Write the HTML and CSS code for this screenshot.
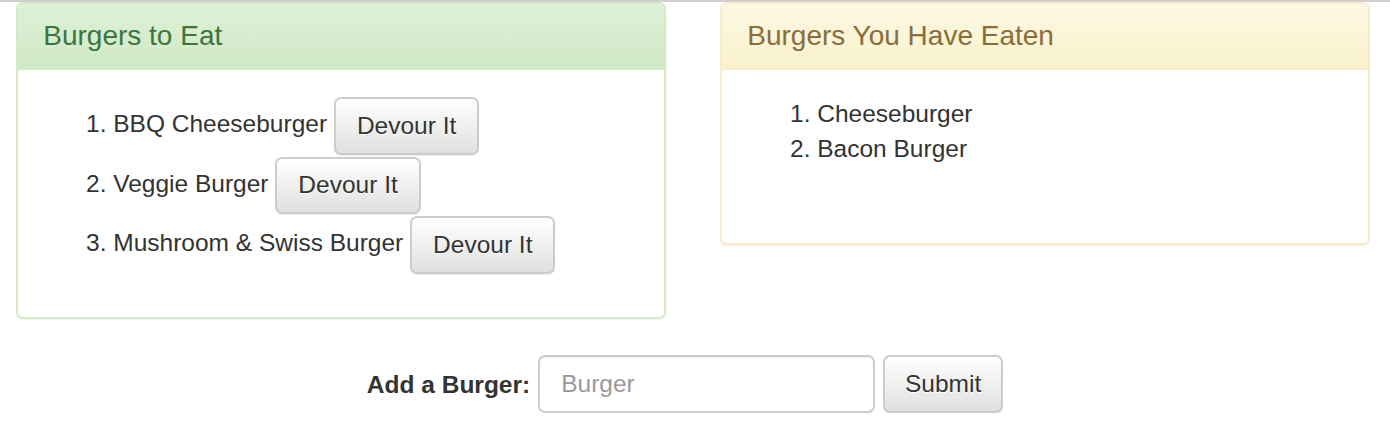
FILE: index.html
```html
<!DOCTYPE html>
<html>
<head>
<meta charset="utf-8">
<title>Burgers</title>
<link rel="stylesheet" href="styles.css">
</head>
<body>
<div class="topline"></div>
<div class="row">
  <div class="panel panel-success">
    <div class="panel-heading"><h3 class="panel-title">Burgers to Eat</h3></div>
    <div class="panel-body">
      <ol class="list list-eat">
        <li>BBQ Cheeseburger <button class="btn">Devour It</button></li>
        <li>Veggie Burger <button class="btn">Devour It</button></li>
        <li>Mushroom &amp; Swiss Burger <button class="btn">Devour It</button></li>
      </ol>
    </div>
  </div>
  <div class="panel panel-warning">
    <div class="panel-heading"><h3 class="panel-title">Burgers You Have Eaten</h3></div>
    <div class="panel-body">
      <ol class="list list-eaten">
        <li>Cheeseburger</li>
        <li>Bacon Burger</li>
      </ol>
    </div>
  </div>
</div>
<form class="add-form">
  <label class="add-label" for="burger">Add a Burger:</label>
  <input class="form-control" id="burger" type="text" placeholder="Burger">
  <button class="btn" type="button">Submit</button>
</form>
</body>
</html>
```

FILE: styles.css
```css
html, body {
  margin: 0;
  padding: 0;
  background: #fff;
}
body {
  font-family: "Liberation Sans", Arial, Helvetica, sans-serif;
  font-size: 24.5px;
  line-height: 35px;
  color: #333;
}
.topline {
  height: 2px;
  background: #cfcfcf;
}
.row {
  display: flex;
  gap: 54px;
  padding-left: 16px;
}
.panel {
  width: 650px;
  box-sizing: border-box;
  border: 2px solid transparent;
  border-radius: 7px;
  background: #fff;
  box-shadow: 0 1px 2px rgba(0, 0, 0, 0.05);
  align-self: flex-start;
}
.panel-heading {
  padding: 16.5px 25.25px;
  border-bottom: 2px solid transparent;
  border-radius: 5px 5px 0 0;
}
.panel-title {
  margin: 0;
  font-size: 28px;
  line-height: 30.8px;
  font-weight: 400;
}
.panel-success { border-color: #d6e9c6; }
.panel-success .panel-heading {
  color: #3c763d;
  background: linear-gradient(to bottom, #dff0d8 0%, #d0e9c6 100%);
  border-color: #d6e9c6;
}
.panel-warning { border-color: #faebcc; }
.panel-warning .panel-heading {
  color: #8a6d3b;
  background: linear-gradient(to bottom, #fcf8e3 0%, #faf2cc 100%);
  border-color: #faebcc;
}
.panel-body {
  padding: 26.25px 26.25px 25.25px;
}
.list {
  margin: 0 0 17.5px;
  padding-left: 69px;
}
.list-eaten {
  margin-bottom: 52px;
}
.btn {
  display: inline-block;
  vertical-align: middle;
  box-sizing: border-box;
  margin: 1px 0;
  padding: 10.5px 21px;
  font-family: inherit;
  font-size: 24.5px;
  line-height: 32.5px;
  color: #333;
  text-shadow: 0 1px 0 #fff;
  background: linear-gradient(to bottom, #fff 0%, #e0e0e0 100%);
  border: 2px solid #ccc;
  border-radius: 7px;
  box-shadow: inset 0 1px 0 rgba(255, 255, 255, 0.15), 0 1px 1px rgba(0, 0, 0, 0.075);
  cursor: pointer;
}
.add-form {
  display: flex;
  align-items: center;
  justify-content: center;
  gap: 8px;
  margin-top: 36px;
  padding-right: 20px;
}
.add-label {
  font-weight: 700;
}
.form-control {
  box-sizing: border-box;
  width: 337px;
  height: 58px;
  padding: 10.5px 21px;
  font-family: inherit;
  font-size: 24.5px;
  line-height: 35px;
  color: #555;
  background: #fff;
  border: 2px solid #ccc;
  border-radius: 7px;
  box-shadow: inset 0 1px 1px rgba(0, 0, 0, 0.075);
  outline: none;
}
.form-control::placeholder {
  color: #999;
}
.add-form .btn {
  margin: 0;
  width: 120px;
  padding: 10.5px 0;
  height: 58px;
}
```
